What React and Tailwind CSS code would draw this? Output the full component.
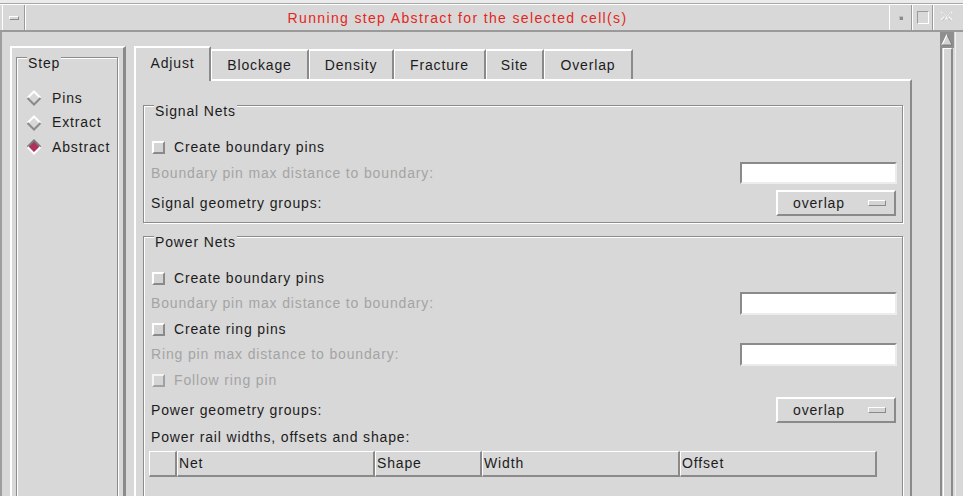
import React from "react";

const raised =
  "border-2 border-white border-r-[#8a8a8a] border-b-[#8a8a8a]";
const etched =
  "border border-[#8c8c8c] shadow-[inset_1px_1px_0_#ffffff,1px_1px_0_#ffffff]";

const Diamond = ({ on }) => (
  <svg width="16" height="16" viewBox="0 0 16 16" className="shrink-0">
    <polygon points="8,1 15,8 8,15 1,8" fill={on ? "#b0305e" : "#d8d8d8"} />
    <polyline points="1.5,8 8,1.5 14.5,8" fill="none" stroke={on ? "#7a7a7a" : "#ffffff"} strokeWidth="2" />
    <polyline points="1.5,8 8,14.5 14.5,8" fill="none" stroke={on ? "#ffffff" : "#8a8a8a"} strokeWidth="2" />
  </svg>
);

const Check = ({ faded }) => (
  <div
    className={`w-[13px] h-[13px] shrink-0 bg-[#d4d4d4] border-2 border-white border-r-[#8a8a8a] border-b-[#8a8a8a] ${
      faded ? "opacity-70" : ""
    }`}
  />
);

const Field = ({ h }) => (
  <div
    className={`w-[157px] ${h} bg-white border-2 border-[#8a8a8a] border-r-[#ececec] border-b-[#ececec]`}
  />
);

const Menu = () => (
  <div className={`w-[120px] h-[26px] mr-[1px] ${raised} flex items-center pl-[15px] pr-[8px]`}>
    <span className="flex-1">overlap</span>
    <div className="w-[18px] h-[6px] border border-white border-r-[#8a8a8a] border-b-[#8a8a8a] bg-[#d4d4d4]" />
  </div>
);

const Group = ({ label, className, children }) => (
  <div className={`relative ${etched} ${className}`}>
    <span className="absolute left-[10px] top-[-3px] px-[1px] leading-[16px] bg-[#d8d8d8]">{label}</span>
    {children}
  </div>
);

const tabs = [
  ["Blockage", "w-[98px]"],
  ["Density", "w-[85px]"],
  ["Fracture", "w-[92px]"],
  ["Site", "w-[58px]"],
  ["Overlap", "w-[89px]"],
];

const cols = [
  ["", "w-[28px]"],
  ["Net", "w-[198px]"],
  ["Shape", "w-[107px]"],
  ["Width", "w-[198px]"],
  ["Offset", "w-[197px]"],
];

export default function App() {
  return (
    <div className="w-[963px] h-[496px] overflow-hidden bg-[#d8d8d8] flex flex-col font-['Liberation_Sans',Arial,sans-serif] text-[14px] tracking-[0.85px] text-[#1c1c1c]">
      {/* outer top edge */}
      <div className="h-[4px] shrink-0 bg-[#ebebeb] border-b border-[#a8a8a8]" />

      {/* title bar */}
      <div className="h-[28px] shrink-0 flex border-t border-white border-b-2 border-b-[#9a9a9a] pl-[2px] pr-[5px]">
        <div className="w-[23px] border-l border-white border-r border-r-[#9a9a9a] flex items-center justify-center">
          <div className="w-[10px] h-[4px] border border-white border-r-[#8a8a8a] border-b-[#8a8a8a]" />
        </div>
        <div className="flex-1 flex items-center justify-center border-l border-white text-[#e3261c] tracking-[1.35px] pt-[1px]">
          Running step Abstract for the selected cell(s)
        </div>
        <div className="w-[23px] border-l border-white border-r border-r-[#9a9a9a] flex items-center justify-center">
          <div className="w-[4px] h-[4px] bg-[#8a8a8a] border-t border-l border-[#bdbdbd]" />
        </div>
        <div className="w-[21px] border-l border-white border-r border-r-[#9a9a9a] flex items-center justify-center">
          <div className="w-[12px] h-[13px] border border-[#9a9a9a] border-r-white border-b-white" />
        </div>
        <div className="w-[25px] border-l border-white flex items-center justify-center">
          <svg width="15" height="15" viewBox="0 0 15 15">
            <path d="M2 2 L6 6 L2 10 M13 2 L9 6 L13 10 M6 6 L9 9 M9 6 L6 9" stroke="#f2f2f2" strokeWidth="1.6" fill="none" />
            <path d="M3 3 L6.5 7 L3 11 M12 3 L8.5 7 L12 11" stroke="#b8b8b8" strokeWidth="0.8" fill="none" />
          </svg>
        </div>
      </div>

      {/* body */}
      <div className="flex-1 min-h-0 flex">
        <div className="w-[940px] flex border-l-2 border-l-[#9e9e9e] pl-[8px] pt-[14px]">
          {/* Step */}
          <div className="w-[116px] h-[470px] shrink-0 border-2 border-white border-r-[3px] border-r-[#8a8a8a] border-b-[#8a8a8a] pl-[4px] pr-[5px] pt-[9px]">
            <div className={`relative h-[460px] ${etched}`}>
              <span className="absolute left-[10px] top-[-3px] px-[1px] leading-[16px] bg-[#d8d8d8]">Step</span>
              <div className="flex flex-col pt-[32px] pl-[9px] gap-[8.5px]">
                {["Pins", "Extract", "Abstract"].map((s) => (
                  <div key={s} className="h-[16px] flex items-center gap-[10px]">
                    <Diamond on={s === "Abstract"} />
                    <span>{s}</span>
                  </div>
                ))}
              </div>
            </div>
          </div>

          {/* tabbed notebook */}
          <div className="ml-[8px] w-[778px] flex flex-col">
            <div className="h-[33px] flex items-end">
              <div className="relative z-10 w-[77px] h-[35px] -mb-[2px] bg-[#d8d8d8] border-l-2 border-t-2 border-white border-r-2 border-r-[#8a8a8a] flex items-center justify-center pb-[3px]">
                Adjust
              </div>
              {tabs.map(([t, w]) => (
                <div
                  key={t}
                  className={`${w} h-[30px] border-l border-t-2 border-white border-r-2 border-r-[#8a8a8a] flex items-center justify-center`}
                >
                  {t}
                </div>
              ))}
            </div>

            <div className="h-[470px] border-t-2 border-l-2 border-white border-r-2 border-r-[#8a8a8a] pt-[24px] pl-[7px] pr-[7px]">
              <Group label="Signal Nets" className="h-[118px]">
                <div className="flex flex-col pt-[31px] pl-[7px] pr-[5px]">
                  <div className="h-[20px] flex items-center gap-[9px] pl-[1px]">
                    <Check />
                    <span>Create boundary pins</span>
                  </div>
                  <div className="mt-[5px] h-[22px] flex items-center justify-between">
                    <span className="text-[#a4a4a4]">Boundary pin max distance to boundary:</span>
                    <Field h="h-[22px]" />
                  </div>
                  <div className="mt-[6px] h-[26px] flex items-center justify-between">
                    <span>Signal geometry groups:</span>
                    <Menu />
                  </div>
                </div>
              </Group>

              <Group label="Power Nets" className="mt-[13px] h-[400px]">
                <div className="flex flex-col pt-[31px] pl-[7px] pr-[5px]">
                  <div className="h-[20px] flex items-center gap-[9px] pl-[1px]">
                    <Check />
                    <span>Create boundary pins</span>
                  </div>
                  <div className="mt-[4px] h-[23px] flex items-center justify-between">
                    <span className="text-[#a4a4a4]">Boundary pin max distance to boundary:</span>
                    <Field h="h-[23px]" />
                  </div>
                  <div className="mt-[4px] h-[20px] flex items-center gap-[9px] pl-[1px]">
                    <Check />
                    <span>Create ring pins</span>
                  </div>
                  <div className="mt-[4px] h-[23px] flex items-center justify-between">
                    <span className="text-[#a4a4a4]">Ring pin max distance to boundary:</span>
                    <Field h="h-[23px]" />
                  </div>
                  <div className="mt-[4px] h-[20px] flex items-center gap-[9px] pl-[1px]">
                    <Check faded />
                    <span className="text-[#a4a4a4]">Follow ring pin</span>
                  </div>
                  <div className="mt-[7px] h-[26px] flex items-center justify-between">
                    <span>Power geometry groups:</span>
                    <Menu />
                  </div>
                  <div className="mt-[4px] h-[20px] flex items-center">
                    <span>Power rail widths, offsets and shape:</span>
                  </div>
                  <div className="mt-[4px] -ml-[2px] h-[26px] flex">
                    {cols.map(([c, w]) => (
                      <div
                        key={c || "blank"}
                        className={`${w} h-full border-t border-l border-white border-r-2 border-b-2 border-r-[#8a8a8a] border-b-[#8a8a8a] pl-[1px] flex items-center`}
                      >
                        {c}
                      </div>
                    ))}
                  </div>
                </div>
              </Group>
            </div>
          </div>
        </div>

        {/* scrollbar */}
        <div className="w-[16px] flex flex-col border-l-2 border-l-[#8a8a8a] border-r border-r-[#f0f0f0]">
          <svg width="14" height="16" viewBox="0 0 14 16" className="shrink-0 -ml-[2px]">
            <rect x="0" y="0" width="14" height="16" fill="#8f8f8f" />
            <polygon points="7,2.5 12,13 2,13" fill="#d4d4d4" />
            <polyline points="2,13 7,2.5" stroke="#ffffff" strokeWidth="1.2" fill="none" />
            <polyline points="7,2.5 12,13 2,13" stroke="#6e6e6e" strokeWidth="0.8" fill="none" />
          </svg>
          <div className="flex-1 ml-[1px] mr-[2px] bg-[#d6d6d6] border-t border-l border-white border-r-2 border-r-[#8a8a8a]" />
        </div>
      </div>
    </div>
  );
}
